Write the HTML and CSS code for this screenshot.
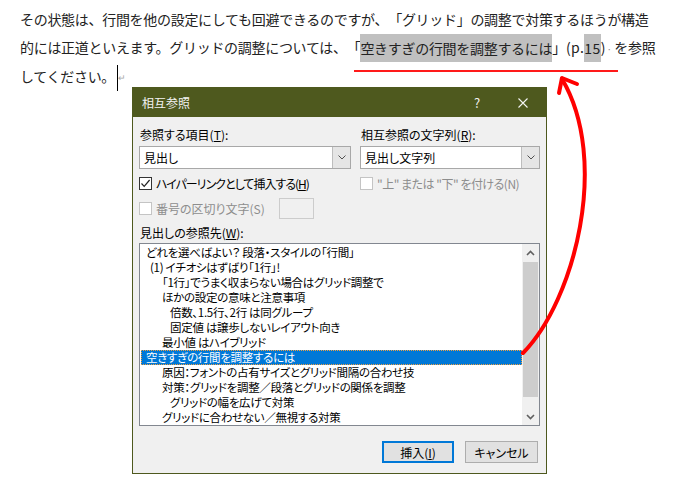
FILE: index.html
```html
<!DOCTYPE html>
<html>
<head>
    <meta charset="utf-8">
    <title>相互参照</title>
    <link rel="stylesheet" href="styles.css">
</head>
<body>
    <div class="doc">
        <p class="line">その状態は、行間を他の設定にしても回避できるのですが、「グリッド」の調整で対策するほうが構造</p>
        <p class="line">的には正道といえます。グリッドの調整については、「<span class="fld">空きすぎの行間を調整するには</span>」<span class="ref">(p.<span class="fld">15</span>)</span><span class="spmark">·</span> を参照</p>
        <p class="line">してください。<span class="caret"></span><span class="pmark">↵</span></p>
    </div>

    <div class="dialog">
        <div class="titlebar">
            <span class="title">相互参照</span>
            <span class="tbtn">?</span>
            <span class="tbtn">
                <svg width="10" height="10" viewBox="0 0 10 10"><path d="M0.5 0.5 L9.5 9.5 M9.5 0.5 L0.5 9.5" stroke="#f4f4f4" stroke-width="1.1"/></svg>
            </span>
        </div>

        <div class="body">
            <div class="top">
                <div class="col">
                    <div class="label">参照する項目(<u>T</u>):</div>
                    <div class="select">
                        <span class="val">見出し</span>
                        <span class="drop"><svg width="8" height="5" viewBox="0 0 8 5"><path d="M0.5 0.5 L4 4 L7.5 0.5" fill="none" stroke="#505050" stroke-width="1"/></svg></span>
                    </div>
                    <div class="check">
                        <span class="box"><svg width="11" height="11" viewBox="0 0 11 11"><path d="M1.5 5.5 L4.2 8.3 L9.6 2" fill="none" stroke="#222" stroke-width="1.2"/></svg></span>
                        <span class="narrow">ハイパーリンクとして挿入する(<u>H</u>)</span>
                    </div>
                    <div class="check sep-row off">
                        <span class="box"></span>
                        <span>番号の区切り文字(S)</span>
                        <span class="sepbox"></span>
                    </div>
                </div>
                <div class="col">
                    <div class="label">相互参照の文字列(<u>R</u>):</div>
                    <div class="select">
                        <span class="val">見出し文字列</span>
                        <span class="drop"><svg width="8" height="5" viewBox="0 0 8 5"><path d="M0.5 0.5 L4 4 L7.5 0.5" fill="none" stroke="#505050" stroke-width="1"/></svg></span>
                    </div>
                    <div class="check off">
                        <span class="box"></span>
                        <span class="semi">"上" または "下" を付ける(N)</span>
                    </div>
                </div>
            </div>

            <div class="label list-label">見出しの参照先(<u>W</u>):</div>
            <div class="list">
                <div class="items">
                    <div class="item l1">どれを選べばよい？ 段落・スタイルの「行間」</div>
                    <div class="item l2">(1) イチオシはずばり「1行」!</div>
                    <div class="item l3">「1行」でうまく収まらない場合はグリッド調整で</div>
                    <div class="item l3">ほかの設定の意味と注意事項</div>
                    <div class="item l4">倍数、1.5行、2行 は同グループ</div>
                    <div class="item l4">固定値 は譲歩しないレイアウト向き</div>
                    <div class="item l3">最小値 はハイブリッド</div>
                    <div class="item l1 selected">空きすぎの行間を調整するには</div>
                    <div class="item l3">原因：フォントの占有サイズとグリッド間隔の合わせ技</div>
                    <div class="item l3">対策：グリッドを調整／段落とグリッドの関係を調整</div>
                    <div class="item l4">グリッドの幅を広げて対策</div>
                    <div class="item l3">グリッドに合わせない／無視する対策</div>
                </div>
                <div class="scroll">
                    <span class="arrow up"><svg width="9" height="6" viewBox="0 0 9 6"><path d="M1 5 L4.5 1.5 L8 5" fill="none" stroke="#606060" stroke-width="1.6"/></svg></span>
                    <span class="thumb"></span>
                    <span class="arrow down"><svg width="9" height="6" viewBox="0 0 9 6"><path d="M1 1 L4.5 4.5 L8 1" fill="none" stroke="#606060" stroke-width="1.6"/></svg></span>
                </div>
            </div>

            <div class="buttons">
                <button class="default">挿入(<u>I</u>)</button>
                <button>キャンセル</button>
            </div>
        </div>
    </div>

    <!-- 赤い注釈線と矢印 -->
    <svg class="annot" width="688" height="477" viewBox="0 0 688 477">
        <line x1="354" y1="71" x2="618" y2="71" stroke="#ff1a1a" stroke-width="2"/>
        <path d="M523 353 C575 300 610 160 562 79" fill="none" stroke="#ff0000" stroke-width="4" stroke-linecap="round"/>
        <path d="M559 93 L562 78 L577 84" fill="none" stroke="#ff0000" stroke-width="4" stroke-linecap="round" stroke-linejoin="round"/>
    </svg>
</body>
</html>
```

FILE: styles.css
```css
body {
    margin: 0;
    background: #fff;
    font-family: "Noto Sans CJK JP", "Noto Sans", sans-serif;
    color: #222;
}

.doc {
    padding: 6px 0 0 20px;
}

.line {
    margin: 0;
    font-size: 14px;
    line-height: 27.5px;
    letter-spacing: -0.3px;
    text-spacing-trim: space-all;
    white-space: nowrap;
}

.fld {
    display: inline-block;
    background: #c0c0c0;
    line-height: 28px;
    vertical-align: top;
}

.ref {
    letter-spacing: 0.4px;
}

.spmark {
    color: #888;
    font-size: 9px;
    margin-left: 1px;
}

.caret {
    display: inline-block;
    width: 1px;
    height: 26px;
    background: #000;
    vertical-align: middle;
    margin-left: 2px;
}

.pmark {
    color: #a8a8a8;
    font-size: 9px;
    vertical-align: middle;
}

.dialog {
    position: absolute;
    left: 132px;
    top: 87px;
    width: 415px;
    height: 387px;
    box-sizing: border-box;
    border: 1px solid #4e591e;
    background: #f0f0f0;
    font-size: 12px;
    font-feature-settings: "palt";
    text-spacing-trim: space-all;
    color: #000;
}

.titlebar {
    height: 29px;
    background: #4e591e;
    color: #f2f2f2;
    display: flex;
    align-items: center;
    padding-left: 9px;
}

.title {
    flex: 1;
}

.tbtn {
    width: 46px;
    height: 29px;
    display: flex;
    align-items: center;
    justify-content: center;
    font-size: 13px;
}

.body {
    padding: 10px 6px 0 6px;
}

.top {
    display: grid;
    grid-template-columns: 212px 180px;
    column-gap: 9px;
}

.label {
    line-height: 16px;
    height: 16px;
    padding-left: 1px;
}

.select {
    margin-top: 3px;
    height: 23px;
    box-sizing: border-box;
    border: 1px solid #a8a8a8;
    background: #fff;
    display: flex;
}

.select .val {
    flex: 1;
    padding-left: 4px;
    line-height: 21px;
}

.select .drop {
    width: 17px;
    background: #e5e5e5;
    border-left: 1px solid #bdbdbd;
    display: flex;
    align-items: center;
    justify-content: center;
}

.check {
    margin-top: 6px;
    height: 16px;
    display: flex;
    align-items: center;
    gap: 4px;
}

.check .box {
    width: 13px;
    height: 13px;
    box-sizing: border-box;
    border: 1px solid #333;
    background: #fff;
    display: flex;
    align-items: center;
    justify-content: center;
}

.check .narrow {
    letter-spacing: -1px;
}

.check .semi {
    letter-spacing: -0.5px;
}

.check.off {
    color: #8d8d8d;
}

.check.off .box {
    border-color: #c4c4c4;
}

.sep-row {
    margin-top: 7px;
    height: 21px;
}

.sepbox {
    margin-left: 10px;
    width: 35px;
    height: 21px;
    box-sizing: border-box;
    border: 1px solid #cccccc;
}

.list-label {
    margin-top: 6px;
}

.list {
    margin-top: 2px;
    height: 183px;
    box-sizing: border-box;
    border: 1px solid #828790;
    background: #fff;
    display: flex;
}

.items {
    flex: 1;
    padding: 1px 0 0 1px;
    overflow: hidden;
    font-size: 11.5px;
    letter-spacing: -0.3px;
}

.item {
    height: 15px;
    line-height: 15px;
    white-space: nowrap;
}

.item.l1 { padding-left: 5px; }
.item.l2 { padding-left: 9px; }
.item.l3 { padding-left: 21px; }
.item.l4 { padding-left: 29px; }

.item.selected {
    background: #0078d7;
    color: #fff;
    outline: 1px dotted #f0a040;
    outline-offset: -1px;
}

.scroll {
    width: 17px;
    background: #f0f0f0;
    display: flex;
    flex-direction: column;
}

.scroll .arrow {
    display: flex;
    align-items: center;
    justify-content: center;
}

.scroll .up {
    height: 18px;
}

.scroll .thumb {
    height: 135px;
    margin: 0 1px;
    background: #cdcdcd;
}

.scroll .down {
    margin-top: auto;
    height: 17px;
}

.buttons {
    margin-top: 15px;
    margin-right: 2px;
    display: flex;
    justify-content: flex-end;
    gap: 11px;
}

button {
    width: 73px;
    height: 22px;
    box-sizing: border-box;
    border: 1px solid #adadad;
    background: #e1e1e1;
    font-family: inherit;
    font-size: 12px;
    font-feature-settings: "palt";
    color: #000;
    padding: 0;
}

button.default {
    width: 72px;
    border: 2px solid #0078d7;
}

.annot {
    position: absolute;
    left: 0;
    top: 0;
    pointer-events: none;
}
```
